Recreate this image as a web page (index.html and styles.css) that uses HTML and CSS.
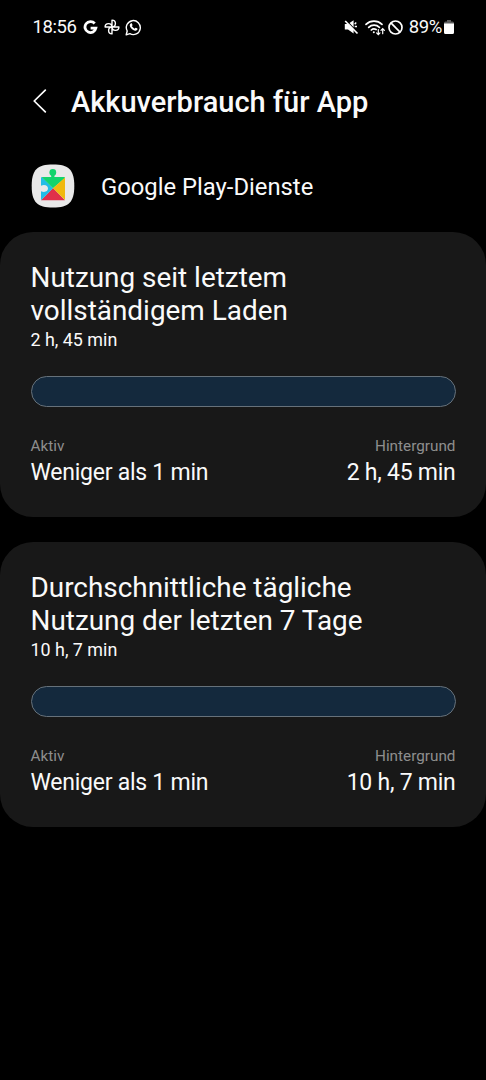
FILE: index.html
```html
<!DOCTYPE html>
<html lang="de">
<head>
<meta charset="utf-8">
<title>Akkuverbrauch für App</title>
<link rel="stylesheet" href="styles.css">
</head>
<body>
<div class="status">
  <div class="status-left">
    <span class="clock">18:56</span>
    <svg class="ic-google" width="15" height="15" viewBox="0 0 15 15" fill="none" stroke="#fff" stroke-width="2.8"><path d="M11.700 3.500A5.500 5.500 0 1 0 12.900 8.100H7.600"/></svg>
    <svg class="ic-fan" width="16" height="16" viewBox="0 0 16 16" fill="none" stroke="#fff" stroke-width="1.400" stroke-linejoin="round"><path d="M8 8V1.100A3.400 3.400 0 0 1 8 7.900M8 8H14.900A3.400 3.400 0 0 1 8.100 8M8 8V14.900A3.400 3.400 0 0 1 8 8.100M8 8H1.100A3.400 3.400 0 0 1 7.900 8"/></svg>
    <svg class="ic-chat" width="17" height="17" viewBox="0 0 17 17"><path d="M1.200 15.800l1-3.800a7 7 0 1 1 2.700 2.700z" fill="none" stroke="#fff" stroke-width="1.400" stroke-linejoin="round"/><path d="M5.700 4.500c.6-.5 1-.4 1.200.1l.6 1.300c.1.400-.5.900-.7 1.200.7 1.300 1.600 2 2.900 2.600.4-.3.800-1 1.200-.9l1.400.7c.5.300.1 1.200-.3 1.600-1.100 1-2.700.5-4.200-.4C6.100 9.600 5 8.100 4.800 6.700c-.1-.9.300-1.800.9-2.200z" fill="#fff"/></svg>
  </div>
  <div class="status-right">
    <svg width="15" height="16" viewBox="0 0 15 16"><path d="M.8 5h3.200L9.600 1.200v13.200L4 10.600H.8z" fill="#fff"/><path d="M10.700 5.200l1.500-1.700M10.700 7.600h2.300" stroke="#fff" stroke-width="1.500"/><path d="M2.200 1.300l12 12.700" stroke="#000" stroke-width="1.200"/><path d="M1.200 2l12.300 12.500" stroke="#fff" stroke-width="1.700"/></svg>
    <svg class="ic-wifi" width="21" height="17" viewBox="0 0 21 17" fill="none" stroke="#fff" stroke-width="1.700" stroke-linecap="round"><path d="M1 5.300a11.500 11.500 0 0 1 16 0M3.700 8.300a7.600 7.600 0 0 1 10.700 0M6.300 11a4 4 0 0 1 4.800-.5"/><circle cx="8.800" cy="13.200" r="1" fill="#fff" stroke="none"/><path d="M13.300 10.500v5M11.600 13.900l1.700 1.800 1.700-1.800M17.700 14.700V9.600M16 11.300l1.700-1.800 1.700 1.800" stroke-width="1.200"/></svg>
    <svg class="ic-block" width="15" height="15" viewBox="0 0 15 15" fill="none" stroke="#fff" stroke-width="1.700"><circle cx="7.500" cy="7.500" r="6.500"/><path d="M2.900 2.900l9.200 9.200"/></svg>
    <span class="percent">89%</span>
    <svg class="ic-battery" width="10" height="14" viewBox="0 0 10 14"><path d="M3 0h4v1.500h1.500A1.500 1.500 0 0 1 10 3v1H0V3a1.500 1.500 0 0 1 1.500-1.500H3z" fill="#5c5c5c"/><path d="M0 3.500h10v9A1.500 1.500 0 0 1 8.500 14h-7A1.500 1.500 0 0 1 0 12.500z" fill="#fff"/></svg>
  </div>
</div>

<header class="header">
  <svg class="back" width="14" height="24" viewBox="0 0 14 24" fill="none" stroke="#fff" stroke-width="1.700" stroke-linecap="round" stroke-linejoin="round"><path d="M12.300 1.200L1.200 12l11.100 10.800"/></svg>
  <h1 class="title">Akkuverbrauch für App</h1>
</header>

<div class="app">
  <svg class="app-icon" width="44" height="44" viewBox="0 0 44 44">
    <path d="M22 .5C38 .5 43.300 6 43.300 22S38 43.500 22 43.500.700 38 .700 22 6 .5 22 .5z" fill="#e9e9e9"/>
    <circle cx="21.800" cy="8.500" r="3.400" fill="#12d46c"/>
    <path d="M20.200 10h3.200v3.500h-3.200z" fill="#12d46c"/>
    <path d="M10 36.300L22 24 34 36.300z" fill="#e0304a"/>
    <path d="M10 14a1 1 0 0 1 1-1L22 24.300 10 36.300v-9.100c4 1.800 7-.2 7-2.700s-3-4.500-7-2.700z" fill="#22bde6"/>
    <path d="M10.600 13H33a1 1 0 0 1 1 1L22 24.300z" fill="#12d46c"/>
    <path d="M34 13.500V36L22 24.300z" fill="#f0b90f"/>
  </svg>
  <span class="app-name">Google Play-Dienste</span>
</div>

<main class="cards">
  <section class="card">
    <h2 class="card-title">Nutzung seit letztem<br>vollständigem Laden</h2>
    <p class="total">2 h, 45 min</p>
    <div class="bar"></div>
    <div class="split">
      <div class="stat"><span class="label">Aktiv</span><span class="value">Weniger als 1 min</span></div>
      <div class="stat stat-end"><span class="label">Hintergrund</span><span class="value">2 h, 45 min</span></div>
    </div>
  </section>
  <section class="card">
    <h2 class="card-title">Durchschnittliche tägliche<br>Nutzung der letzten 7 Tage</h2>
    <p class="total">10 h, 7 min</p>
    <div class="bar"></div>
    <div class="split">
      <div class="stat"><span class="label">Aktiv</span><span class="value">Weniger als 1 min</span></div>
      <div class="stat stat-end"><span class="label">Hintergrund</span><span class="value">10 h, 7 min</span></div>
    </div>
  </section>
</main>
</body>
</html>
```
FILE: styles.css
```css
* { box-sizing: border-box; margin: 0; padding: 0; }
body {
  background: #000;
  color: #fafafa;
  font-family: Roboto, "Liberation Sans", sans-serif;
  min-height: 1080px;
}
svg { display: block; flex: none; }
.status {
  height: 54px;
  padding: 0 32px 0 32.500px;
  display: flex;
  align-items: center;
  justify-content: space-between;
  font-size: 18.500px;
  letter-spacing: -0.4px;
  line-height: 23px;
}
.status-left, .status-right { display: flex; align-items: center; }
.clock { width: 50.500px; }
.ic-fan { margin-left: 6px; }
.ic-chat { margin-left: 5px; }
.ic-wifi { margin-left: 6px; }
.ic-block { margin-left: 2px; }
.percent { margin-left: 6px; }
.ic-battery { margin-left: 2px; }
.header {
  height: 94px;
  padding-left: 33px;
  display: flex;
  align-items: center;
}
.title {
  margin: 2px 0 0 24px;
  font-size: 29px;
  font-weight: 500;
  line-height: 34px;
}
.app {
  height: 84px;
  padding: 16px 0 0 31px;
  display: flex;
  align-items: flex-start;
}
.app-name { margin-left: 26px; font-size: 23.800px; line-height: 46px; }
.cards { display: flex; flex-direction: column; gap: 25px; }
.card {
  height: 285px;
  padding: 29px 30.500px 0;
  border-radius: 33px;
  background: #181818;
}
.card-title { font-size: 27.900px; font-weight: 400; line-height: 33px; }
.total { margin-top: 2px; font-size: 17.900px; line-height: 21px; }
.bar {
  height: 31px;
  margin-top: 26px;
  border: 1px solid #66717a;
  border-radius: 16px;
  background: #14293d;
}
.split { margin-top: 29px; display: flex; justify-content: space-between; }
.stat { display: flex; flex-direction: column; }
.stat-end { align-items: flex-end; }
.label { color: #8e8e8e; font-size: 15.300px; line-height: 20px; }
.value { margin-top: 3px; font-size: 23px; letter-spacing: -0.25px; line-height: 28px; }
```
